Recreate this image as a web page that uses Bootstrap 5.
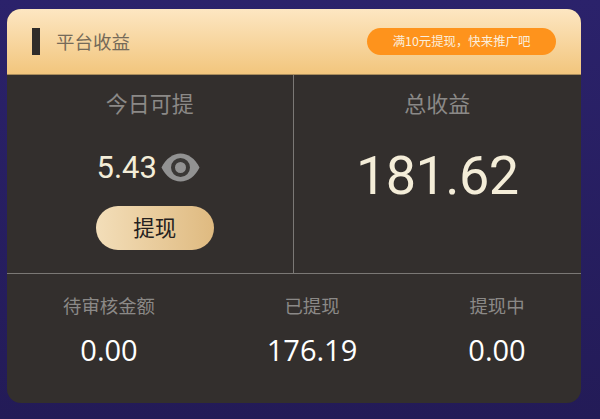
<!DOCTYPE html>
<html lang="zh"><head><meta charset="utf-8">
<link href="https://cdn.jsdelivr.net/npm/bootstrap@5.3.0/dist/css/bootstrap.min.css" rel="stylesheet">
<style>
html,body{height:100%;overflow:hidden}
body{background:linear-gradient(180deg,#2b226b,#231b57);padding:9px 19px 16px 7px;font-family:"Noto Sans CJK SC","Noto Sans",sans-serif}
.earn-panel{height:394px;background:#332f2d;border-radius:14px;overflow:hidden}
.earn-head{height:66px;background:linear-gradient(180deg,#fde6c2,#f2c67d);border-bottom:1px solid #a98c5c;padding:0 25px 0 25px}
.earn-bar{width:8px;height:27px;background:#2f2c2a;margin-right:15px}
.earn-title{font-size:18.500px;color:#756a59;line-height:1;padding-left:1px}
.earn-tip{width:189px;height:27px;border-radius:14px;background:#fe931c;color:#fbeedc;font-size:12.400px;line-height:1}
.earn-top{height:199px;border-bottom:1px solid #7b7875}
.earn-left{width:286.500px;border-right:1px solid #7b7875}
.earn-label{font-size:22px;color:#8b8987;line-height:1;padding-top:16px}
.earn-num{font-family:"Roboto",sans-serif;color:#f4edd8;line-height:1}
.num-small{font-size:31px}
.num-big{font-size:54px;margin-top:36px;letter-spacing:-.6px}
.earn-amt{margin-top:38px;height:32px;margin-left:-3px}
.earn-btn{width:118px;height:44px;border-radius:22px;border:0;padding:0 0 2px;margin-top:23px;margin-left:10px;background:linear-gradient(90deg,#f3deb9,#dfba80);color:#24211f;font-size:21.500px;line-height:1}
.earn-bottom{flex:1;padding-top:22px}
.stat-l{font-size:18.400px;color:#8b8987;line-height:1}
.stat-v{font-family:"Open Sans",sans-serif;font-size:29px;color:#fff;line-height:1;margin-top:21px}
.stat-a{width:204px}
.stat-b{width:202px}
.stat-c{width:168px}
</style></head>
<body>
<div class="earn-panel d-flex flex-column">
  <div class="earn-head d-flex align-items-center">
    <span class="earn-bar"></span><span class="earn-title">平台收益</span>
    <span class="earn-tip ms-auto d-flex align-items-center justify-content-center">满10元提现，快来推广吧</span>
  </div>
  <div class="earn-top d-flex">
    <div class="earn-left d-flex flex-column align-items-center">
      <div class="earn-label">今日可提</div>
      <div class="earn-amt d-flex align-items-center gap-1">
        <span class="earn-num num-small">5.43</span>
        <svg width="39" height="29" viewBox="0 0 39 29" aria-hidden="true"><path d="M0.500 14.500C5 5.500 12 .5 19.500 .5S34 5.500 38.500 14.500C34 23.500 27 28.500 19.500 28.500S5 23.500 0.500 14.500Z" fill="#929292"/><circle cx="19.500" cy="14.500" r="7.500" fill="none" stroke="#3a3836" stroke-width="4"/></svg>
      </div>
      <button class="earn-btn" type="button">提现</button>
    </div>
    <div class="flex-fill d-flex flex-column align-items-center">
      <div class="earn-label">总收益</div>
      <div class="earn-num num-big">181.62</div>
    </div>
  </div>
  <div class="earn-bottom d-flex text-center">
    <div class="stat-a"><div class="stat-l">待审核金额</div><div class="stat-v">0.00</div></div>
    <div class="stat-b"><div class="stat-l">已提现</div><div class="stat-v">176.19</div></div>
    <div class="stat-c"><div class="stat-l">提现中</div><div class="stat-v">0.00</div></div>
  </div>
</div>
<script src="https://cdn.jsdelivr.net/npm/bootstrap@5.3.0/dist/js/bootstrap.bundle.min.js"></script>
</body></html>
